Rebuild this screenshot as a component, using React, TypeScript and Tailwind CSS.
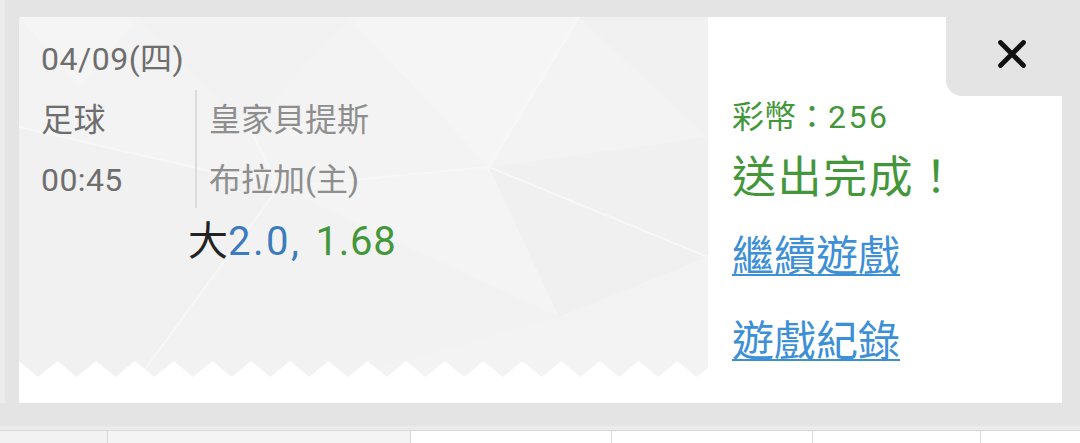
const FONT = "font-['Roboto','Noto_Sans_CJK_TC',sans-serif]";

// zigzag edge at the bottom of the ticket
function Zigzag() {
  return (
    <svg className="absolute bottom-0 left-0 h-[16px] w-full" preserveAspectRatio="none">
      <defs>
        <pattern id="zz" x="19" y="0" width="38.75" height="16" patternUnits="userSpaceOnUse">
          <polygon points="0,16 19.4,0 38.75,16" fill="#ffffff" />
        </pattern>
      </defs>
      <rect width="100%" height="16" fill="url(#zz)" />
    </svg>
  );
}

// faint low-poly decoration behind the ticket text
function LowPoly() {
  return (
    <svg className="absolute inset-0 h-full w-full" viewBox="0 0 689 360" preserveAspectRatio="none">
      <polygon points="0,0 120,0 60,70" fill="#f5f5f5" />
      <polygon points="120,0 330,0 230,110" fill="#f2f2f2" />
      <polygon points="330,0 560,0 470,150" fill="#f5f5f5" />
      <polygon points="560,0 689,0 689,120" fill="#f1f1f1" />
      <polygon points="0,110 260,170 120,360 0,360" fill="#f1f1f1" />
      <polygon points="260,170 470,150 540,300" fill="#f4f4f4" />
      <polygon points="470,150 689,120 689,240 540,300" fill="#f0f0f0" />
      <polygon points="260,170 540,300 330,360 120,360" fill="#f2f2f2" />
      <polyline points="0,110 260,170 470,150 689,240" fill="none" stroke="#f7f7f7" strokeWidth="2" />
      <polyline points="120,360 260,170 230,110" fill="none" stroke="#f7f7f7" strokeWidth="2" />
      <polyline points="470,150 560,0" fill="none" stroke="#f7f7f7" strokeWidth="2" />
    </svg>
  );
}

export default function App() {
  return (
    <div className={`flex h-[443px] w-[1080px] flex-col overflow-hidden bg-[#e4e4e4] ${FONT}`}>
      <div className="border-l-[5px] border-[#ececec] pl-[14px] pt-[17px]">
        <div className="relative flex h-[386px] w-[1043px] bg-white">
          {/* ticket */}
          <div className="relative h-[360px] w-[689px] overflow-hidden bg-[#f3f3f3]">
            <LowPoly />
            <Zigzag />
            <div className="relative pl-[22px] pt-[26px]">
              <p className="text-[32px] leading-[32px] tracking-[0.5px] text-[#6e6e6e]">04/09(四)</p>

              <div className="mt-[15px] flex h-[118px]">
                <div className="flex w-[154px] flex-col gap-[28px] pt-[14px] text-[32px] leading-[32px] tracking-[0.4px] text-[#6e6e6e]">
                  <span>足球</span>
                  <span>00:45</span>
                </div>
                <div className="flex flex-col gap-[28px] border-l-2 border-[#dcdcdc] pl-[12px] pt-[14px] text-[32px] leading-[32px] text-[#8e8e8e]">
                  <span>皇家貝提斯</span>
                  <span>布拉加(主)</span>
                </div>
              </div>

              <p className="ml-[147px] mt-[14px] text-[40px] leading-[40px]">
                <span className="text-[#222222]">大</span>
                <span className="tracking-[2.5px] text-[#3c7bbd]">2.0,</span>
                <span className="ml-[14px] tracking-[0.8px] text-[#43973a]">1.68</span>
              </p>
            </div>
          </div>

          {/* result */}
          <div className="flex flex-col pl-[24px] pt-[84px]">
            <p className="text-[32px] leading-[32px] text-[#43973a]">
              彩幣：<span className="tracking-[2.5px]">256</span>
            </p>
            <p className="mt-[23px] text-[44px] leading-[44px] tracking-[1.5px] text-[#43973a]">送出完成！</p>
            <a className="mt-[36px] w-fit text-[42px] leading-[42px] text-[#3d8fd6] underline decoration-2 underline-offset-[3px]">
              繼續遊戲
            </a>
            <a className="mt-[43px] w-fit text-[42px] leading-[42px] text-[#3d8fd6] underline decoration-2 underline-offset-[3px]">
              遊戲紀錄
            </a>
          </div>

          {/* close */}
          <button
            type="button"
            className="absolute right-0 top-[-17px] flex h-[96px] w-[116px] items-start justify-start rounded-bl-[16px] bg-[#e4e4e4] pl-[51px] pt-[40px]"
          >
            <svg width="30" height="28" viewBox="0 0 30 28">
              <path d="M3.5 2.5 26.5 25.5M26.5 2.5 3.5 25.5" stroke="#111111" strokeWidth="4.8" strokeLinecap="round" fill="none" />
            </svg>
          </button>
        </div>
      </div>

      <div className="mt-[23px] h-[5px] border-b border-[#d8d8d8] bg-[#ebebeb]" />
      <div className="flex h-[12px] bg-white">
        <div className="w-[108px] border-r border-[#d8d8d8] bg-[#f2f2f2]" />
        <div className="w-[303px] border-r border-[#d8d8d8] bg-[#f4f4f4]" />
        <div className="w-[201px] border-r border-[#d8d8d8]" />
        <div className="w-[201px] border-r border-[#d8d8d8]" />
        <div className="w-[168px] border-r border-[#d8d8d8]" />
        <div className="flex-1" />
      </div>
    </div>
  );
}
